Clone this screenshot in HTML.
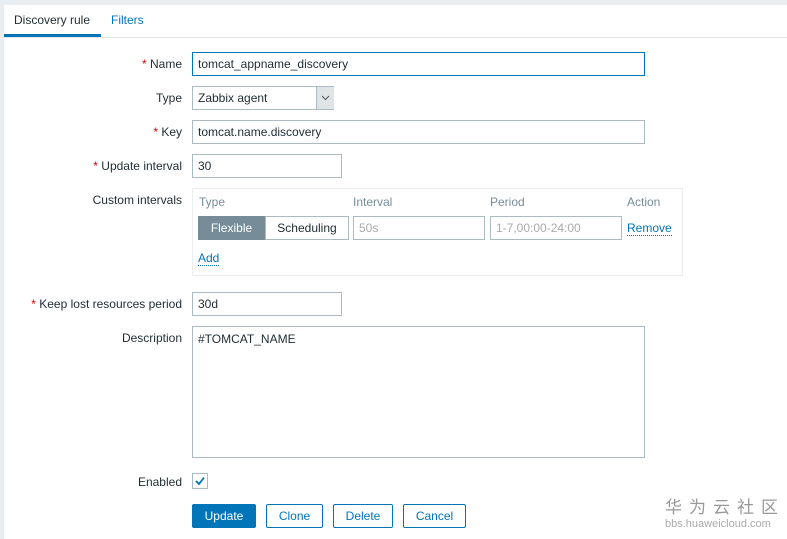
<!DOCTYPE html><html><head><style>
body{margin:0;width:787px;height:539px;background:#ebeef0;font-family:"Liberation Sans",Arial,sans-serif;font-size:12px;color:#1f2c33;position:relative;overflow:hidden}
.p{position:absolute;left:4px;top:5px;width:783px;height:534px;background:#fff}
.a{position:absolute}
.lbl{position:absolute;right:605px;text-align:right;white-space:nowrap}
.r{color:#d40000}
.in{position:absolute;border:1px solid #acbbc2;box-sizing:border-box;height:24px;padding:0 5px;line-height:22px;background:#fff;white-space:nowrap}
.btn{position:absolute;top:504px;height:24px;box-sizing:border-box;border:1px solid #0275b8;color:#0275b8;line-height:22px;text-align:center;border-radius:2px;background:#fff}
.lnk{color:#0275b8;border-bottom:1px dotted #0275b8}
</style></head><body>
<div class="p"></div>
<div class="a" style="left:4px;top:37px;width:783px;height:1px;background:#dfe4e7"></div>
<div class="a" style="left:14px;top:13px">Discovery rule</div>
<div class="a" style="left:4px;top:34px;width:97px;height:3px;background:#0275b8"></div>
<div class="a" style="left:111px;top:13px;color:#0275b8">Filters</div>

<div class="lbl" style="top:57px"><span class="r">*</span> Name</div>
<div class="in" style="left:192px;top:52px;width:453px;border-color:#0275b8">tomcat_appname_discovery</div>
<div class="lbl" style="top:91px">Type</div>
<div class="in" style="left:192px;top:86px;width:142px">Zabbix agent</div>
<div class="a" style="left:316px;top:87px;width:17px;height:22px;background:#dfe4e7;border-left:1px solid #acbbc2"><svg width="17" height="22"><path d="M5 9 L8.5 12.5 L12 9" fill="none" stroke="#555" stroke-width="1"/></svg></div>
<div class="lbl" style="top:125px"><span class="r">*</span> Key</div>
<div class="in" style="left:192px;top:120px;width:453px">tomcat.name.discovery</div>
<div class="lbl" style="top:159px"><span class="r">*</span> Update interval</div>
<div class="in" style="left:192px;top:154px;width:150px">30</div>
<div class="lbl" style="top:193px">Custom intervals</div>
<div class="a" style="left:192px;top:188px;width:491px;height:88px;border:1px solid #ebeef0;box-sizing:border-box"></div>
<div class="a" style="left:199px;top:195px;color:#768d99">Type</div>
<div class="a" style="left:353px;top:195px;color:#768d99">Interval</div>
<div class="a" style="left:490px;top:195px;color:#768d99">Period</div>
<div class="a" style="left:627px;top:195px;color:#768d99">Action</div>
<div class="a" style="left:198px;top:216px;width:67px;height:24px;background:#768d99;color:#fff;line-height:24px;text-align:center">Flexible</div>
<div class="in" style="left:265px;top:216px;width:84px;text-align:center">Scheduling</div>
<div class="in" style="left:353px;top:216px;width:132px;color:#aaa">50s</div>
<div class="in" style="left:490px;top:216px;width:132px;color:#aaa">1-7,00:00-24:00</div>
<div class="a" style="left:627px;top:221px"><span class="lnk">Remove</span></div>
<div class="a" style="left:198px;top:251px"><span class="lnk">Add</span></div>
<div class="lbl" style="top:297px"><span class="r">*</span> Keep lost resources period</div>
<div class="in" style="left:192px;top:292px;width:150px">30d</div>
<div class="lbl" style="top:331px">Description</div>
<div class="in" style="left:192px;top:326px;width:453px;height:132px;line-height:14px;padding-top:5px">#TOMCAT_NAME</div>
<div class="lbl" style="top:475px">Enabled</div>
<div class="a" style="left:192px;top:473px;width:16px;height:16px;border:1px solid #acbbc2;box-sizing:border-box"><svg width="14" height="14"><path d="M3 7 L6 10 L11 3.5" fill="none" stroke="#0275b8" stroke-width="1.8"/></svg></div>
<div class="btn" style="left:192px;width:64px;background:#0275b8;color:#fff">Update</div>
<div class="btn" style="left:266px;width:57px">Clone</div>
<div class="btn" style="left:333px;width:60px">Delete</div>
<div class="btn" style="left:403px;width:63px">Cancel</div>
<div class="a" style="left:665px;top:496px;font-family:'Noto Sans CJK SC',sans-serif;font-size:17px;line-height:20px;letter-spacing:7px;color:#999">华为云社区</div>
<div class="a" style="left:665px;top:518px;font-size:11px;line-height:12px;color:#aaa">bbs.huaweicloud.com</div>
</body></html>
